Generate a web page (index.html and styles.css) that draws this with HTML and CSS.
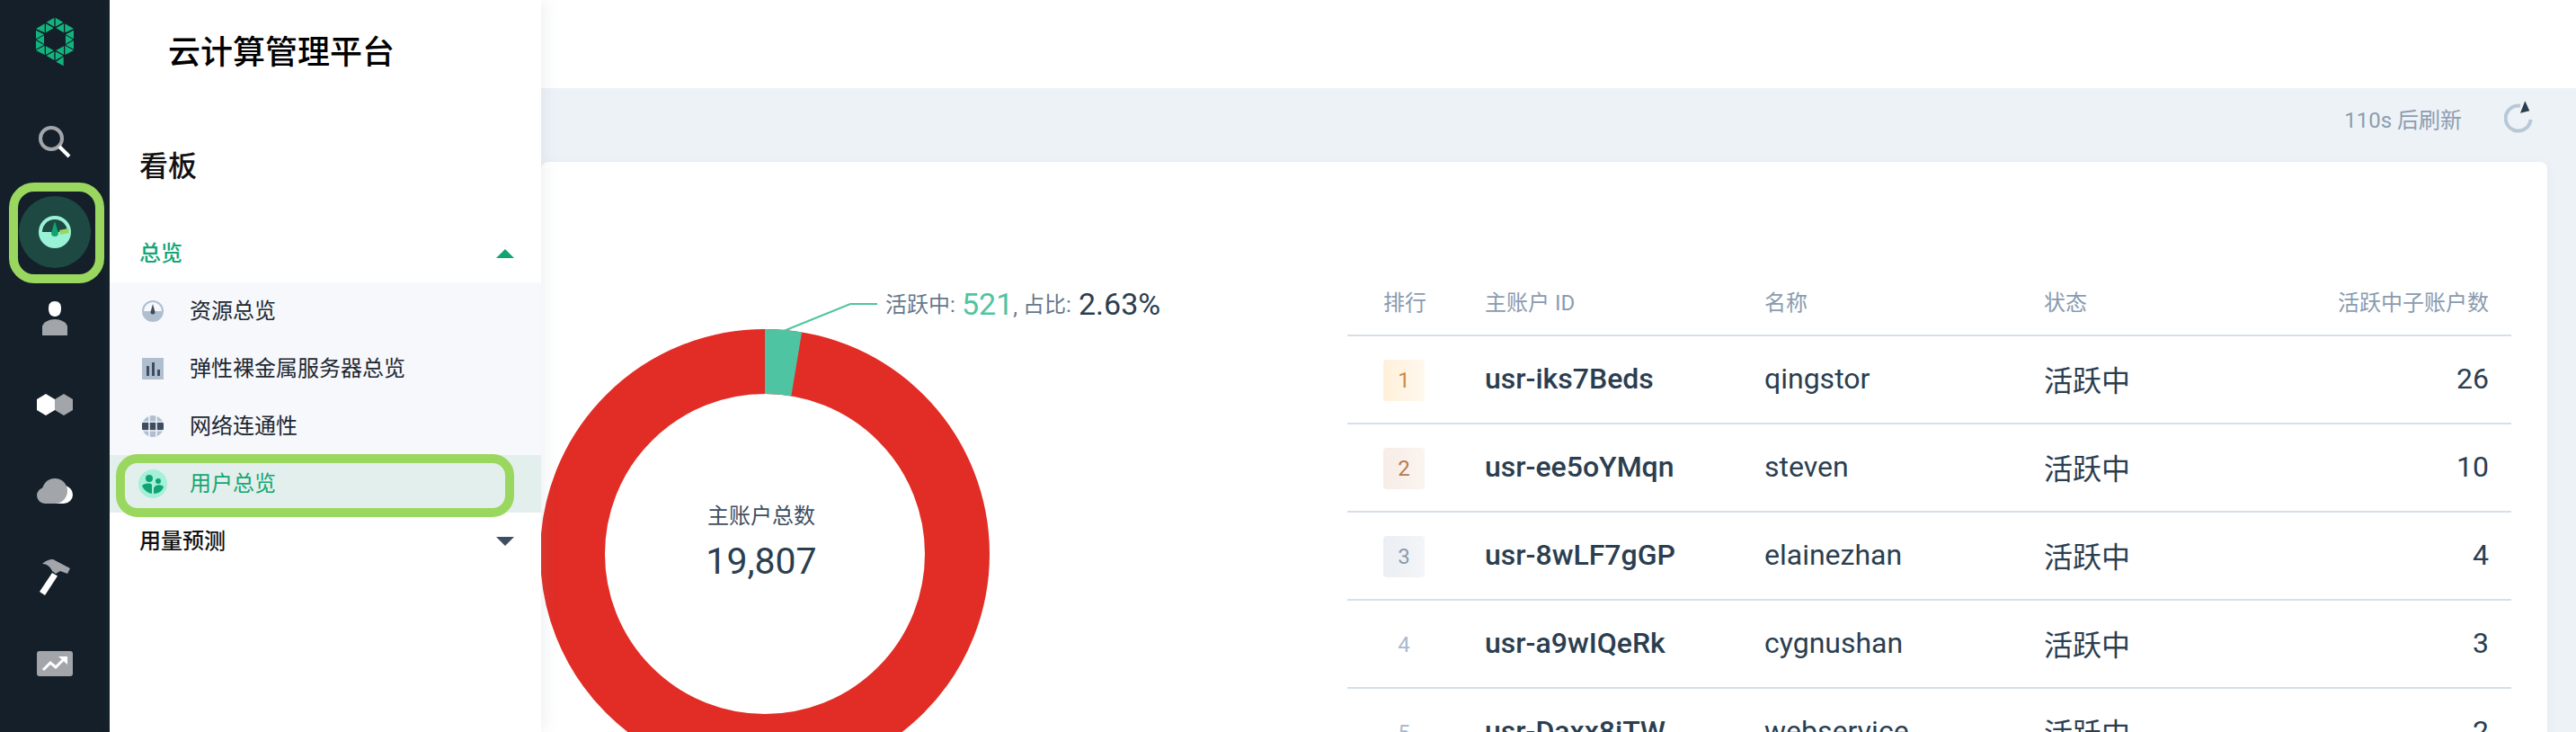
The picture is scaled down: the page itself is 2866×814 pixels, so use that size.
FILE: index.html
```html
<!DOCTYPE html>
<html lang="zh-CN">
<head>
    <meta charset="UTF-8">
    <meta name="viewport" content="width=device-width, initial-scale=1.0">
    <title>云计算管理平台</title>
    <link rel="stylesheet" href="styles.css">
</head>
<body>
    <div class="app">
        <nav class="rail">
            <svg class="rail-logo" width="42" height="55" viewBox="112 55 126 165">
                <g fill="#14b37d">
                    <polygon points="173,57 147,72 173,87"/>
                    <polygon points="177,57 203,72 177,87"/>
                    <polygon points="141,77 112,94 141,107"/>
                    <polygon points="145,77 145,107 171,92"/>
                    <polygon points="205,77 205,107 179,92"/>
                    <polygon points="209,77 238,94 209,107"/>
                    <polygon points="112,99 139,113 112,128"/>
                    <polygon points="238,99 211,113 238,128"/>
                    <polygon points="139,116 114,130 139,145"/>
                    <polygon points="211,116 236,130 211,145"/>
                    <polygon points="112,133 139,148 112,162"/>
                    <polygon points="238,133 211,148 238,162"/>
                    <polygon points="141,150 112,166 141,181"/>
                    <polygon points="209,150 238,166 209,181"/>
                    <polygon points="145,152 171,166 145,181"/>
                    <polygon points="205,152 179,166 205,181"/>
                    <polygon points="173,170 147,184 173,199"/>
                    <polygon points="177,170 203,184 177,199"/>
                    <polygon points="204,187 204,218 179,204"/>
                </g>
            </svg>
            <svg class="rail-icon rail-search" width="40" height="40" viewBox="0 0 40 40">
                <circle cx="16" cy="16" r="12" fill="none" stroke="#a2a5aa" stroke-width="4"/>
                <path d="M25 25 L36 36" stroke="#fff" stroke-width="4"/>
            </svg>
            <div class="rail-active">
                <svg width="36" height="36" viewBox="0 0 36 36">
                    <circle cx="18" cy="18" r="18" fill="#9af2d6"/>
                    <path d="M4 18 A14 14 0 0 1 32 18 Z" fill="#1d4942"/>
                    <path d="M18 6 L22 19 A4 4 0 0 1 14 19 Z" fill="#0fa472"/>
                    <polygon points="23,16 33,14 34,19 24,21" fill="#9ad75f"/>
                </svg>
            </div>
            <svg class="rail-icon rail-user" width="30" height="38" viewBox="0 0 30 38">
                <path d="M15 0 C20 0 22 3 22 8 C22 13 20 17 15 17 C10 17 8 13 8 8 C8 3 10 0 15 0 Z" fill="#fff"/>
                <path d="M1 38 L1 28 C2 23 9 20 15 20 C21 20 28 23 29 28 L29 38 Z" fill="#a2a5aa"/>
            </svg>
            <svg class="rail-icon rail-hex" width="40" height="24" viewBox="0 0 40 24">
                <polygon points="30,0 40,6 40,18 30,24 20,18 20,6" fill="#a2a5aa"/>
                <polygon points="10,0 20,6 20,18 10,24 0,18 0,6" fill="#fff"/>
            </svg>
            <svg class="rail-icon rail-cloud" width="40" height="28" viewBox="0 0 40 28">
                <path d="M30 8 A10 10 0 0 1 30 28 L20 28 Z" fill="#fff"/>
                <circle cx="20" cy="14" r="14" fill="#a2a5aa"/>
                <path d="M9 28 A9 9 0 0 1 9 10 L20 28 Z" fill="#a2a5aa"/>
            </svg>
            <svg class="rail-icon rail-hammer" width="36" height="40" viewBox="0 0 36 40">
                <path d="M4 5 C8 1 13 0 16 0 L35 10 L32 16 L24 13 L19 16 L15 13 C13 8 9 5 4 5 Z" fill="#a2a5aa"/>
                <path d="M15 15 L21 18.500 L7 40 L1 36 Z" fill="#fff"/>
            </svg>
            <svg class="rail-icon rail-chart" width="40" height="28" viewBox="0 0 40 28">
                <rect width="40" height="28" rx="3" fill="#a2a5aa"/>
                <path d="M7 21 L15 13 L21 18 L31 8" fill="none" stroke="#fff" stroke-width="3"/>
                <polygon points="24,6 34,6 34,15" fill="#fff"/>
            </svg>
        </nav>

        <aside class="panel">
            <div class="panel-title">云计算管理平台</div>
            <div class="panel-section">看板</div>
            <div class="group group-open">
                <span class="menu-text">总览</span>
                <i class="arrow arrow-up"></i>
            </div>
            <ul class="submenu">
                <li class="subitem">
                    <svg class="subicon" width="24" height="24" viewBox="0 0 24 24">
                        <circle cx="12" cy="12" r="12" fill="#b0bfd0"/>
                        <path d="M2 12 A10 10 0 0 1 22 12 Z" fill="#f6f8fc"/>
                        <path d="M12 4 L14.5 13 A2.5 2.5 0 0 1 9.500 13 Z" fill="#3e4e60"/>
                    </svg>
                    <span class="menu-text">资源总览</span>
                </li>
                <li class="subitem">
                    <svg class="subicon" width="24" height="24" viewBox="0 0 24 24">
                        <rect width="24" height="24" fill="#b0bfd0"/>
                        <rect x="5" y="9" width="3" height="11" fill="#3e4e60"/>
                        <rect x="11" y="5" width="3" height="15" fill="#3e4e60"/>
                        <rect x="17" y="13" width="3" height="7" fill="#3e4e60"/>
                    </svg>
                    <span class="menu-text">弹性裸金属服务器总览</span>
                </li>
                <li class="subitem">
                    <svg class="subicon" width="24" height="24" viewBox="0 0 24 24">
                        <circle cx="12" cy="12" r="12" fill="#b0bfd0"/>
                        <path d="M8 0 V24 M16 0 V24" stroke="#f6f8fc" stroke-width="1.500"/>
                        <path d="M0 7 H24 M0 17 H24" stroke="#f6f8fc" stroke-width="1"/>
                        <rect y="8" width="24" height="8" rx="1" fill="#3e4e60"/>
                        <path d="M8 8 V16 M16 8 V16" stroke="#f6f8fc" stroke-width="1.500"/>
                    </svg>
                    <span class="menu-text">网络连通性</span>
                </li>
                <li class="subitem subitem-active">
                    <svg class="subicon-big" width="32" height="32" viewBox="0 0 32 32">
                        <circle cx="16" cy="16" r="16" fill="#a5f0d8"/>
                        <circle cx="12" cy="10" r="4" fill="#0fa472"/>
                        <circle cx="22" cy="13" r="3" fill="#0fa472"/>
                        <path d="M4 18 C8 15 13 15 15 17 L15 27 C10 26 6 23 4 18 Z" fill="#0fa472"/>
                        <path d="M17 27 L17 21 C18 17 24 16 28 19 C27 24 22 27 17 27 Z" fill="#0fa472"/>
                    </svg>
                    <span class="menu-text">用户总览</span>
                </li>
            </ul>
            <div class="group">
                <span class="menu-text">用量预测</span>
                <i class="arrow arrow-down"></i>
            </div>
        </aside>

        <main class="main">
            <div class="topbar"></div>
            <div class="toolbar">
                <span class="refresh-text">110s 后刷新</span>
                <svg class="refresh-icon" width="36" height="40" viewBox="0 0 36 40">
                    <path d="M18 6.800 A14 14 0 1 0 29.600 22" fill="none" stroke="#b9c8d8" stroke-width="4"/>
                    <polygon points="23.300,1.300 28.300,12.300 18,14.700" fill="#2b3e50"/>
                </svg>
            </div>
            <section class="card">
                <div class="chart">
                    <svg width="897" height="634" viewBox="0 0 897 634">
                        <circle cx="249" cy="436" r="214" fill="none" stroke="#e12d25" stroke-width="72"/>
                        <path d="M249 186 A250 250 0 0 1 290.100 189.400 L278.300 260.400 A178 178 0 0 0 249 258 Z" fill="#4fc4a2"/>
                        <path d="M270 188 L344 158 H374" fill="none" stroke="#4fc4a2" stroke-width="2"/>
                        <text class="label" x="383" y="167">活跃中:</text>
                        <text class="label-num" x="468" y="170">521<tspan class="label">,</tspan></text>
                        <text class="label" x="536" y="167">占比:</text>
                        <text class="label-pct" x="598" y="170">2.63%</text>
                        <text class="center-label" x="245" y="402">主账户总数</text>
                        <text class="center-num" x="245" y="458">19,807</text>
                    </svg>
                </div>
                <div class="table">
                    <div class="row row-head">
                        <div>排行</div>
                        <div>主账户 ID</div>
                        <div>名称</div>
                        <div>状态</div>
                        <div class="cell-num">活跃中子账户数</div>
                    </div>
                    <div class="row">
                        <div><span class="rank rank-1">1</span></div>
                        <div class="cell-id">usr-iks7Beds</div>
                        <div>qingstor</div>
                        <div>活跃中</div>
                        <div class="cell-num">26</div>
                    </div>
                    <div class="row">
                        <div><span class="rank rank-2">2</span></div>
                        <div class="cell-id">usr-ee5oYMqn</div>
                        <div>steven</div>
                        <div>活跃中</div>
                        <div class="cell-num">10</div>
                    </div>
                    <div class="row">
                        <div><span class="rank rank-3">3</span></div>
                        <div class="cell-id">usr-8wLF7gGP</div>
                        <div>elainezhan</div>
                        <div>活跃中</div>
                        <div class="cell-num">4</div>
                    </div>
                    <div class="row">
                        <div><span class="rank">4</span></div>
                        <div class="cell-id">usr-a9wIQeRk</div>
                        <div>cygnushan</div>
                        <div>活跃中</div>
                        <div class="cell-num">3</div>
                    </div>
                    <div class="row">
                        <div><span class="rank">5</span></div>
                        <div class="cell-id">usr-Daxx8iTW</div>
                        <div>webservice</div>
                        <div>活跃中</div>
                        <div class="cell-num">2</div>
                    </div>
                </div>
            </section>
        </main>
    </div>
</body>
</html>
```
FILE: styles.css
```css
html, body {
    margin: 0;
    padding: 0;
    height: 100%;
    overflow: hidden;
}

body {
    font-family: Roboto, "Noto Sans CJK SC", sans-serif;
    color: #2b3e50;
    background-color: #edf2f7;
}

.app {
    display: flex;
    height: 814px;
    overflow: hidden;
}

/* left dark rail */
.rail {
    flex: 0 0 122px;
    display: flex;
    flex-direction: column;
    align-items: center;
    padding-top: 19px;
    box-sizing: border-box;
    background-color: #141f29;
}

.rail-logo {
    flex: none;
    margin-bottom: 64px;
}

.rail-icon {
    display: block;
    flex: none;
}

.rail-search {
    margin-bottom: 40px;
}

.rail-active {
    position: relative;
    display: flex;
    align-items: center;
    justify-content: center;
    width: 80px;
    height: 80px;
    margin-bottom: 37px;
    border-radius: 50%;
    background-color: #1d4942;
}

/* the rounded annotation box round the active rail item */
.rail-active::after {
    content: "";
    position: absolute;
    left: -11px;
    top: -15px;
    width: 86px;
    height: 92px;
    border: 10px solid #9ad75f;
    border-radius: 28px;
}

.rail-user {
    margin-bottom: 65px;
}

.rail-hex {
    margin-bottom: 70px;
}

.rail-cloud {
    margin-bottom: 62px;
}

.rail-hammer {
    margin-bottom: 62px;
}

/* white menu panel */
.panel {
    position: relative;
    z-index: 2;
    flex: 0 0 480px;
    background-color: white;
    box-shadow: 4px 0 16px rgba(120, 140, 160, 0.12);
}

.panel-title {
    height: 50px;
    padding: 34px 0 0 65px;
    font-size: 36px;
    line-height: 50px;
    font-weight: 500;
    color: #000;
}

.panel-section {
    height: 46px;
    margin-top: 78px;
    padding-left: 33px;
    font-size: 32px;
    line-height: 46px;
    font-weight: 500;
    color: #111;
}

.group {
    display: flex;
    align-items: center;
    justify-content: space-between;
    height: 64px;
    padding: 0 30px 0 33px;
    font-size: 24px;
    font-weight: 500;
    color: #111;
}

.group-open {
    margin-top: 42px;
    color: #15a675;
}

.menu-text {
    padding-bottom: 5px;
}

.arrow {
    width: 0;
    height: 0;
    border-left: 10px solid transparent;
    border-right: 10px solid transparent;
}

.arrow-up {
    border-bottom: 10px solid #0fa472;
}

.arrow-down {
    border-top: 10px solid #3e4e60;
}

.submenu {
    list-style: none;
    margin: 0;
    padding: 0;
    background-color: #f6f8fc;
}

.subitem {
    display: flex;
    align-items: center;
    height: 64px;
    padding-left: 36px;
    font-size: 24px;
    color: #1d2730;
}

.subicon {
    margin-right: 29px;
}

.subicon-big {
    margin: 0 25px 0 -4px;
}

.subitem-active {
    position: relative;
    background-color: #e3efec;
    color: #15a675;
}

/* annotation box round the active submenu item */
.subitem-active::after {
    content: "";
    position: absolute;
    left: 7px;
    top: -1px;
    width: 423px;
    height: 50px;
    border: 10px solid #9ad75f;
    border-radius: 24px;
}

/* right side */
.main {
    flex: 1;
    min-width: 0;
}

.topbar {
    height: 98px;
    background-color: white;
}

.toolbar {
    display: flex;
    align-items: center;
    justify-content: flex-end;
    height: 66px;
    margin-bottom: 16px;
    padding-right: 44px;
    box-sizing: border-box;
}

.refresh-text {
    margin-right: 47px;
    font-size: 24px;
    color: #8d9db0;
}

.card {
    display: flex;
    height: 700px;
    margin-right: 32px;
    border-radius: 8px;
    background-color: white;
    box-shadow: 0 2px 10px rgba(120, 140, 160, 0.1);
}

.chart {
    flex: 0 0 897px;
}

.chart svg {
    display: block;
}

.label {
    font-size: 24px;
    fill: #66788c;
}

.label-num {
    font-size: 34px;
    fill: #4fc4a2;
}

.label-pct {
    font-size: 34px;
    fill: #2b3e50;
}

.center-label {
    font-size: 24px;
    fill: #3e4e60;
    text-anchor: middle;
}

.center-num {
    font-size: 41px;
    fill: #2b3e50;
    text-anchor: middle;
}

.table {
    width: 1295px;
    margin-top: 120px;
}

.row {
    display: grid;
    grid-template-columns: 113px 311px 311px 1fr auto;
    align-items: center;
    height: 98px;
    padding: 0 25px 2px 40px;
    box-sizing: border-box;
    border-bottom: 2px solid #d5dfe9;
    font-size: 32px;
    white-space: nowrap;
}

.row-head {
    height: 74px;
    padding-bottom: 3px;
    font-size: 24px;
    color: #8a9bb0;
}

.cell-id {
    font-weight: 500;
}

.cell-num {
    text-align: right;
}

.rank {
    display: block;
    width: 46px;
    height: 46px;
    margin-top: 4px;
    border-radius: 4px;
    font-size: 24px;
    line-height: 46px;
    text-align: center;
    color: #a9bacb;
}

.rank-1 {
    background: linear-gradient(90deg, #fff0da, #fff8ee);
    color: #d08a40;
}

.rank-2 {
    background: linear-gradient(90deg, #f8ece6, #faf4f0);
    color: #b87a50;
}

.rank-3 {
    background: linear-gradient(90deg, #ebeef2, #f3f5f8);
    color: #8a9bb0;
}
```
